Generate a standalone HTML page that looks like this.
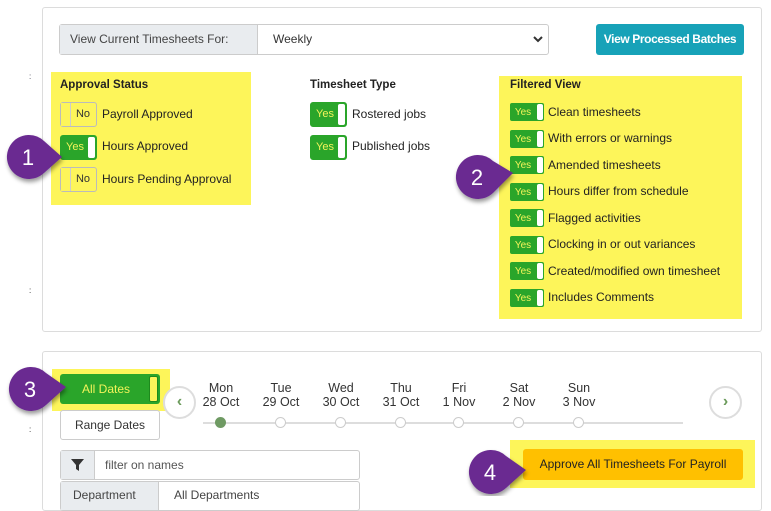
<!DOCTYPE html>
<html><head><meta charset="utf-8"><style>
*{box-sizing:border-box;margin:0;padding:0}
body{width:771px;height:496px;overflow:hidden;background:#fff;font-family:"Liberation Sans",sans-serif;font-size:12px;color:#222;position:relative}
.a{position:absolute}
.panel{position:absolute;border:1px solid #dcdcdc;border-radius:3px;background:#fff}
.yel{position:absolute;background:#fdf55a}
.tg{position:absolute;width:37px;height:25px;border:1px solid #bbb;border-radius:3px;background:#fdf55a;font-size:11px}
.tg.on{background:#2aa52a;border-color:#2aa52a;color:#f3f35a}
.tg.on span{position:absolute;left:0;top:0;width:28px;height:23px;line-height:23px;text-align:center}
.tg.on i{position:absolute;right:1px;top:1px;width:7px;height:21px;background:#fff;border-radius:2px}
.tg.off span{position:absolute;right:6px;top:0;line-height:23px;color:#333}
.tg.off i{position:absolute;left:0;top:0;width:10px;height:23px;background:#fdf55a;border-right:1px solid #ccc}
.lbl{position:absolute;font-size:12px;color:#222}
.sm{position:absolute;width:34px;height:18px;background:#2aa52a;border-radius:2px;font-size:10px;color:#f3f35a}
.sm span{position:absolute;left:0;top:1px;width:26px;text-align:center;line-height:18px}
.sm i{position:absolute;right:1px;top:1px;width:6px;height:16px;background:#fff;border-radius:2px}
.title{position:absolute;font-weight:bold;font-size:11.5px}
.day{position:absolute;width:60px;text-align:center;font-size:12.5px;color:#333;line-height:14px}
.dot{position:absolute;width:11px;height:11px;border-radius:50%;background:#fff;border:1.5px solid #ccc}
.circ{position:absolute;width:33px;height:33px;border-radius:50%;border:2px solid #ddd;background:#fff;color:#6a9a5a;text-align:center;line-height:28px;font-size:16px;font-weight:bold}
</style></head><body>
<div class="a" style="left:29px;top:72px;font-size:8px;color:#445">:</div>
<div class="a" style="left:29px;top:286px;font-size:8px">:</div>
<div class="a" style="left:29px;top:425px;font-size:8px">:</div>

<div class="panel" style="left:42px;top:7px;width:720px;height:325px"></div>
<div class="a" style="left:59px;top:24px;width:490px;height:31px;border:1px solid #ccc;border-radius:3px;background:#fff"></div>
<div class="a" style="left:60px;top:25px;width:198px;height:29px;background:#e9ecef;border-right:1px solid #ccc;line-height:29px;padding-left:10px;color:#444">View Current Timesheets For:</div>
<div class="a" style="left:273px;top:25px;line-height:29px;color:#333">Weekly</div>
<svg class="a" style="left:533px;top:35px" width="10" height="8"><path d="M1 2l4 4 4-4" stroke="#333" stroke-width="2" fill="none"/></svg>
<div class="a" style="left:596px;top:24px;width:148px;height:31px;background:#17a2b8;border-radius:3px;color:#fff;text-align:center;line-height:31px;font-weight:bold;font-size:12px;letter-spacing:-0.4px">View Processed Batches</div>

<div class="yel" style="left:51px;top:72px;width:200px;height:133px"></div>
<div class="title" style="left:60px;top:79px">Approval Status</div>
<div class="tg off" style="left:60px;top:102px"><i></i><span>No</span></div><div class="lbl" style="left:102px;top:107px">Payroll Approved</div>
<div class="tg on" style="left:60px;top:135px"><span>Yes</span><i></i></div><div class="lbl" style="left:102px;top:139px">Hours Approved</div>
<div class="tg off" style="left:60px;top:167px"><i></i><span>No</span></div><div class="lbl" style="left:102px;top:172px">Hours Pending Approval</div>

<div class="title" style="left:310px;top:79px">Timesheet Type</div>
<div class="tg on" style="left:310px;top:102px"><span>Yes</span><i></i></div><div class="lbl" style="left:352px;top:107px">Rostered jobs</div>
<div class="tg on" style="left:310px;top:135px"><span>Yes</span><i></i></div><div class="lbl" style="left:352px;top:139px">Published jobs</div>

<div class="yel" style="left:499px;top:76px;width:243px;height:243px"></div>
<div class="title" style="left:510px;top:79px">Filtered View</div>
<div class="sm" style="left:510px;top:103px"><span>Yes</span><i></i></div><div class="lbl" style="left:548px;top:105px">Clean timesheets</div>
<div class="sm" style="left:510px;top:130px"><span>Yes</span><i></i></div><div class="lbl" style="left:548px;top:131px">With errors or warnings</div>
<div class="sm" style="left:510px;top:156px"><span>Yes</span><i></i></div><div class="lbl" style="left:548px;top:158px">Amended timesheets</div>
<div class="sm" style="left:510px;top:183px"><span>Yes</span><i></i></div><div class="lbl" style="left:548px;top:184px">Hours differ from schedule</div>
<div class="sm" style="left:510px;top:209px"><span>Yes</span><i></i></div><div class="lbl" style="left:548px;top:211px">Flagged activities</div>
<div class="sm" style="left:510px;top:236px"><span>Yes</span><i></i></div><div class="lbl" style="left:548px;top:237px">Clocking in or out variances</div>
<div class="sm" style="left:510px;top:262px"><span>Yes</span><i></i></div><div class="lbl" style="left:548px;top:264px">Created/modified own timesheet</div>
<div class="sm" style="left:510px;top:289px"><span>Yes</span><i></i></div><div class="lbl" style="left:548px;top:290px">Includes Comments</div>

<div class="panel" style="left:42px;top:351px;width:720px;height:160px"></div>
<div class="yel" style="left:52px;top:369px;width:118px;height:42px"></div>
<div class="a" style="left:60px;top:374px;width:100px;height:30px;background:#2aa52a;border-radius:3px;color:#f3f35a;line-height:30px;padding-left:22px;font-size:12px">All Dates</div>
<div class="a" style="left:149px;top:376px;width:9px;height:26px;background:#fdf55a;border-radius:2px;border:1px solid #1d8a1d"></div>
<div class="a" style="left:60px;top:410px;width:100px;height:30px;border:1px solid #ccc;border-radius:3px;background:#fff;text-align:center;line-height:29px;color:#333">Range Dates</div>
<div class="circ" style="left:163px;top:386px">‹</div>
<div class="circ" style="left:709px;top:386px">›</div>
<div class="a" style="left:203px;top:422px;width:480px;height:2px;background:#ddd"></div>
<div class="day" style="left:191px;top:381px">Mon<br>28 Oct</div>
<div class="day" style="left:251px;top:381px">Tue<br>29 Oct</div>
<div class="day" style="left:311px;top:381px">Wed<br>30 Oct</div>
<div class="day" style="left:371px;top:381px">Thu<br>31 Oct</div>
<div class="day" style="left:429px;top:381px">Fri<br>1 Nov</div>
<div class="day" style="left:489px;top:381px">Sat<br>2 Nov</div>
<div class="day" style="left:549px;top:381px">Sun<br>3 Nov</div>
<div class="dot" style="left:215px;top:417px;background:#6f9a63;border-color:#6f9a63"></div>
<div class="dot" style="left:275px;top:417px"></div>
<div class="dot" style="left:335px;top:417px"></div>
<div class="dot" style="left:395px;top:417px"></div>
<div class="dot" style="left:453px;top:417px"></div>
<div class="dot" style="left:513px;top:417px"></div>
<div class="dot" style="left:573px;top:417px"></div>

<div class="a" style="left:60px;top:450px;width:300px;height:30px;border:1px solid #ccc;border-radius:3px;background:#fff"></div>
<div class="a" style="left:61px;top:451px;width:34px;height:28px;background:#e9ecef;border-right:1px solid #ccc"></div>
<svg class="a" style="left:71px;top:459px" width="13" height="12"><path d="M0 0h13L8 6v6L5 10V6z" fill="#333"/></svg>
<div class="a" style="left:105px;top:458px;color:#555">filter on names</div>
<div class="a" style="left:60px;top:481px;width:300px;height:30px;border:1px solid #ccc;border-radius:3px;background:#fff"></div>
<div class="a" style="left:61px;top:482px;width:98px;height:28px;background:#e9ecef;border-right:1px solid #ccc;padding:6px 12px;color:#444">Department</div>
<div class="a" style="left:174px;top:488px;color:#444">All Departments</div>

<div class="yel" style="left:510px;top:440px;width:245px;height:48px"></div>
<div class="a" style="left:523px;top:449px;width:220px;height:31px;background:#ffc000;border-radius:3px;text-align:center;line-height:31px;color:#222">Approve All Timesheets For Payroll</div>

<svg class="a" style="left:0;top:0" width="771" height="496">
<defs><filter id="s"><feDropShadow dx="1" dy="3" stdDeviation="2" flood-opacity=".4"/></filter></defs>
<g fill="#6a2c91" filter="url(#s)">
<path d="M28 135a22 22 0 1 0 16 38l18-16-18-16a22 22 0 0 0-16-6z"/>
<path d="M477 155a22 22 0 1 0 16 38l20-20-20-12a22 22 0 0 0-16-6z"/>
<path d="M30 367a22 22 0 1 0 16 38l20-18-20-14a22 22 0 0 0-16-6z"/>
<path d="M490 450a22 22 0 1 0 16 38l20-18-20-14a22 22 0 0 0-16-6z"/>
</g>
<g fill="#fff" font-family="Liberation Sans" font-size="22" text-anchor="middle">
<text x="28" y="165">1</text><text x="477" y="185">2</text><text x="30" y="397">3</text><text x="490" y="480">4</text>
</g>
</svg>
</body></html>
